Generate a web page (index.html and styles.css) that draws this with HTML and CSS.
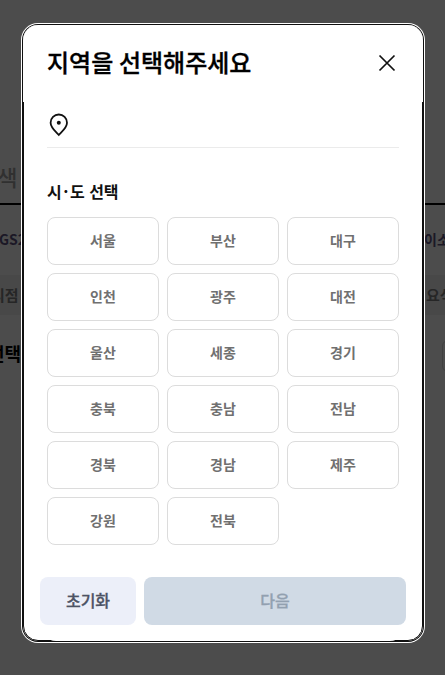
FILE: index.html
```html
<!DOCTYPE html>
<html lang="ko">
<head>
<meta charset="utf-8">
<title>지역 선택</title>
<link rel="stylesheet" href="styles.css">
</head>
<body>
<div class="page" aria-hidden="true">
  <div class="search"><span>검색</span></div>
  <div class="row keywords"><span class="left">GS25</span><span class="right">이소</span></div>
  <div class="row notice"><span class="left">리점</span><span class="right">요식</span></div>
  <div class="row picker"><span class="left">선택</span><span class="chip"></span></div>
</div>
<div class="overlay">
  <section class="modal" role="dialog" aria-labelledby="title">
    <header class="header">
      <h1 id="title">지역을 선택해주세요</h1>
      <button class="close" aria-label="닫기"><svg width="24" height="24" viewBox="0 0 24 24"><path d="M4.5 4.5 19.5 19.5M19.5 4.5 4.5 19.5"/></svg></button>
    </header>
    <div class="content">
      <div class="location">
        <svg width="24" height="24" viewBox="0 0 24 24"><path d="M11.8 22C9.2 19 3.6 14.8 3.6 9.7a8.2 8.2 0 0 1 16.4 0C20 14.8 14.4 19 11.8 22Z"/><circle cx="11.8" cy="9.8" r="2"/></svg>
      </div>
      <h2>시<span class="dot">·</span>도 선택</h2>
      <div class="grid">
        <button>서울</button><button>부산</button><button>대구</button>
        <button>인천</button><button>광주</button><button>대전</button>
        <button>울산</button><button>세종</button><button>경기</button>
        <button>충북</button><button>충남</button><button>전남</button>
        <button>경북</button><button>경남</button><button>제주</button>
        <button>강원</button><button>전북</button>
      </div>
    </div>
    <footer class="footer">
      <button class="reset">초기화</button>
      <button class="next" disabled>다음</button>
    </footer>
  </section>
</div>
</body>
</html>
```
FILE: styles.css
```css
* { box-sizing: border-box; }
body {
  margin: 0;
  height: 675px;
  overflow: hidden;
  background: #4c4c4c;
  font-family: "Noto Sans CJK KR", sans-serif;
}
button { font-family: inherit; padding: 0; border: 0; }
svg { display: block; fill: none; stroke: #111; }

.page { height: 675px; padding-top: 150px; overflow: hidden; }
.search {
  height: 55px;
  border-bottom: 2px solid #000;
  font-size: 22px;
  font-weight: 500;
  line-height: 53px;
  color: #303030;
}
.search span { margin-left: -23px; }
.row {
  display: flex;
  justify-content: space-between;
  align-items: center;
  white-space: nowrap;
}
.keywords { height: 70px; padding-bottom: 2px; font-size: 14px; font-weight: 700; color: #1b1826; }
.keywords .left { margin-left: -1px; }
.right { width: 21px; }
.notice { height: 40px; padding-bottom: 1px; background: #484848; font-size: 15px; font-weight: 700; color: #262626; }
.notice .left { margin-left: -9px; }
.notice .right { width: 19px; }
.picker { height: 76px; font-size: 18px; font-weight: 700; color: #000; }
.picker .left { margin-left: -12px; }
.chip { width: 12px; height: 32px; margin: 5px -9px 0 0; border: 1px solid #404040; border-radius: 8px; }

.overlay {
  position: absolute;
  inset: 0;
  padding: 25px 22px 34px 23px;
}
.modal {
  position: relative;
  display: flex;
  flex-direction: column;
  width: 400px;
  height: 616px;
  border-radius: 15px;
  background: #fff;
  box-shadow: 0 0 0 1px #101010, 0 0 0 2px #fff;
}
.modal::before {
  content: "";
  position: absolute;
  inset: 0;
  border: 1px solid #101010;
  border-radius: 15px;
  pointer-events: none;
}
.header {
  position: relative;
  display: flex;
  justify-content: space-between;
  align-items: center;
  height: 77px;
  padding: 0 24px;
  border-radius: 15px 15px 0 0;
  background: #fff;
}
h1 {
  margin: 0 0 3px;
  font-size: 24px;
  line-height: 36px;
  font-weight: 500;
  word-spacing: -1px;
  color: #000;
  -webkit-text-stroke: 0.35px #000;
}
.close { background: none; margin-bottom: 2px; }
.close svg { stroke-width: 1.7; }
.content { padding: 0 24px; }
.location {
  height: 46px;
  padding-top: 11px;
  border-bottom: 1px solid #ebebeb;
}
.location svg { stroke-width: 1.8; }
.location circle { fill: #111; stroke: none; }
h2 { margin: 31px 0 14px; font-size: 16px; line-height: 24px; font-weight: 700; color: #111; }
.dot { margin: 0 1.5px; }
.grid { display: grid; grid-template-columns: repeat(3, 1fr); gap: 8px; }
.grid button {
  height: 48px;
  padding-bottom: 2px;
  border: 1px solid #dcdcdc;
  border-radius: 8px;
  background: #fff;
  font-size: 14px;
  font-weight: 700;
  color: #707070;
}
.footer {
  position: relative;
  display: flex;
  gap: 8px;
  height: 64px;
  margin: auto 17px 0;
  padding-bottom: 16px;
  border-radius: 0 0 16px 16px;
  background: #fff;
}
.footer button {
  padding-bottom: 2px;
  border-radius: 8px;
  font-size: 16px;
  font-weight: 500;
  -webkit-text-stroke: 0.3px currentColor;
}
.reset { width: 96px; background: #eceff9; color: #4d5365; }
.next { flex: 1; background: #d0dae5; color: #92a0b0; }
```
